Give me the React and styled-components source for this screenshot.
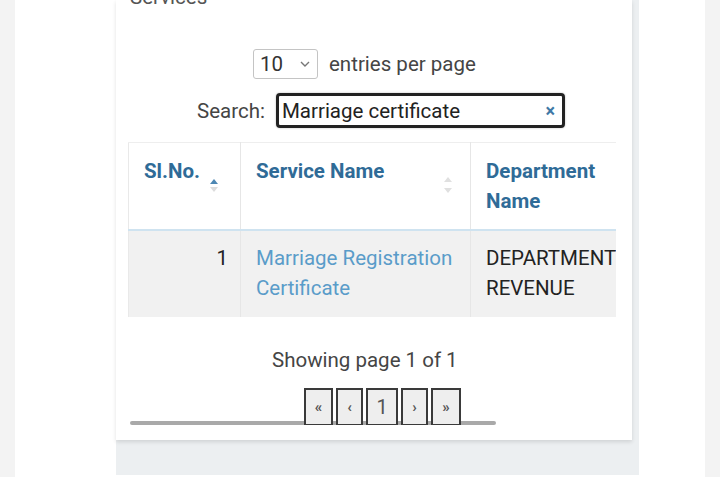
import styled, { createGlobalStyle } from "styled-components";

const GlobalStyle = createGlobalStyle`
  body {
    margin: 0;
    background: #f3f3f3;
    font-family: Roboto, "Liberation Sans", sans-serif;
  }
`;

const Screen = styled.div`
  height: 477px;
  padding: 0 15px;
  overflow: hidden;
`;

const Sheet = styled.div`
  height: 100%;
  background: #ffffff;
  padding-left: 101px;
`;

const Panel = styled.div`
  width: 523px;
  height: 475px;
  background: #eceff1;
`;

const Card = styled.div`
  width: 516px;
  height: 440px;
  box-sizing: border-box;
  background: #ffffff;
  box-shadow: 0 2px 4px rgba(0, 0, 0, 0.12);
  padding-left: 12px;
  overflow: hidden;
  color: #454545;
  font-size: 20.5px;
`;

const Title = styled.div`
  margin-top: -14px;
  padding-left: 2px;
  line-height: 22px;
  color: #555;
`;

const EntriesRow = styled.div`
  display: flex;
  align-items: center;
  gap: 11px;
  margin-top: 41px;
  padding-left: 125px;
`;

const Select = styled.div`
  display: flex;
  align-items: center;
  justify-content: space-between;
  box-sizing: border-box;
  width: 65px;
  height: 30px;
  padding: 0 6px 0 6px;
  border: 1px solid #c4c4c4;
  border-radius: 3px;
  color: #333;
`;

const SearchRow = styled.div`
  display: flex;
  align-items: center;
  gap: 11px;
  margin-top: 14px;
  padding-left: 69px;
`;

const SearchBox = styled.div`
  display: flex;
  align-items: center;
  justify-content: space-between;
  box-sizing: border-box;
  width: 289px;
  height: 35px;
  padding: 0 7px 0 3px;
  border: 3px solid #222;
  border-radius: 4px;
  box-shadow: 0 0 2px rgba(0, 0, 0, 0.3);
  color: #222;
`;

const Clear = styled.span`
  color: #3f79a6;
  font-weight: 700;
  font-size: 18px;
`;

const Scroller = styled.div`
  position: relative;
  width: 488px;
  height: 283px;
  margin-top: 14px;
  overflow: hidden;
`;

const Table = styled.table`
  width: 622px;
  border-collapse: collapse;
  table-layout: fixed;
  border-left: 1px solid #e9e9e9;
  line-height: 30px;
`;

const HeadCell = styled.th`
  position: relative;
  text-align: left;
  vertical-align: top;
  padding: 13px 15px;
  font-weight: 700;
  color: #2f6b97;
  border-top: 1px solid #eeeeee;
  border-right: 1px solid #e6e6e6;
  border-bottom: 2px solid #cfe3f0;
`;

const SortIcon = styled.span`
  position: absolute;
  right: ${(p) => p.$right}px;
  top: ${(p) => p.$top}px;
  display: flex;
  flex-direction: column;
  gap: ${(p) => p.$gap}px;
`;

const Arrow = styled.span`
  width: 0;
  height: 0;
  border-left: 4px solid transparent;
  border-right: 4px solid transparent;
  ${(p) =>
    p.$down
      ? `border-top: 5px solid ${p.$color};`
      : `border-bottom: 5px solid ${p.$color};`}
`;

const Row = styled.tr`
  background: #f1f1f1;
`;

const Cell = styled.td`
  vertical-align: top;
  padding: 12px 15px 14px 15px;
  border-right: 1px solid #e6e6e6;
  text-align: ${(p) => (p.$right ? "right" : "left")};
  color: ${(p) => (p.$link ? "#5a9cc9" : "#222")};
  ${(p) => p.$right && "padding-right: 12px;"}
`;

const Showing = styled.div`
  margin-top: 31px;
  padding-left: 144px;
  line-height: 24px;
  color: #454545;
`;

const Pager = styled.div`
  position: relative;
  z-index: 1;
  display: flex;
  gap: 3px;
  margin-top: 16px;
  padding-left: 176px;
`;

const PageButton = styled.div`
  display: flex;
  align-items: center;
  justify-content: center;
  box-sizing: border-box;
  width: ${(p) => p.$w}px;
  height: 38px;
  background: #eeeeee;
  border: 2px solid #3a3a3a;
  color: #555;
  font-size: ${(p) => (p.$small ? 15 : 20)}px;
  font-weight: ${(p) => (p.$small ? 700 : 400)};
`;

const Thumb = styled.div`
  position: absolute;
  left: 2px;
  bottom: 0;
  width: 366px;
  height: 4px;
  border-radius: 2px;
  background: #a9a9a9;
`;

const Chevron = () => (
  <svg width="12" height="8" viewBox="0 0 12 8">
    <path d="M2 2l4 4 4-4" fill="none" stroke="#777" strokeWidth="1.4" />
  </svg>
);

const pages = [
  { label: "«", w: 29, small: true },
  { label: "‹", w: 27, small: true },
  { label: "1", w: 32 },
  { label: "›", w: 27, small: true },
  { label: "»", w: 30, small: true },
];

export default function App() {
  return (
    <>
      <GlobalStyle />
      <Screen>
        <Sheet>
          <Panel>
            <Card>
              <Title>Services</Title>

              <EntriesRow>
                <Select>
                  <span>10</span>
                  <Chevron />
                </Select>
                <span>entries per page</span>
              </EntriesRow>

              <SearchRow>
                <span>Search:</span>
                <SearchBox>
                  <span>Marriage certificate</span>
                  <Clear>×</Clear>
                </SearchBox>
              </SearchRow>

              <Scroller>
                <Table>
                  <colgroup>
                    <col style={{ width: 112 }} />
                    <col style={{ width: 230 }} />
                    <col style={{ width: 280 }} />
                  </colgroup>
                  <thead>
                    <tr>
                      <HeadCell>
                        Sl.No.
                        <SortIcon $right={22} $top={36} $gap={3}>
                          <Arrow $color="#4d87b3" />
                          <Arrow $down $color="#dcdcdc" />
                        </SortIcon>
                      </HeadCell>
                      <HeadCell>
                        Service Name
                        <SortIcon $right={18} $top={34} $gap={6}>
                          <Arrow $color="#e0e0e0" />
                          <Arrow $down $color="#e0e0e0" />
                        </SortIcon>
                      </HeadCell>
                      <HeadCell>
                        Department
                        <br />
                        Name
                      </HeadCell>
                    </tr>
                  </thead>
                  <tbody>
                    <Row>
                      <Cell $right>1</Cell>
                      <Cell $link>
                        Marriage Registration
                        <br />
                        Certificate
                      </Cell>
                      <Cell>
                        DEPARTMENT
                        <br />
                        REVENUE
                      </Cell>
                    </Row>
                  </tbody>
                </Table>

                <Showing>Showing page 1 of 1</Showing>

                <Pager>
                  {pages.map((p) => (
                    <PageButton key={p.label} $w={p.w} $small={p.small}>
                      {p.label}
                    </PageButton>
                  ))}
                </Pager>

                <Thumb />
              </Scroller>
            </Card>
          </Panel>
        </Sheet>
      </Screen>
    </>
  );
}
